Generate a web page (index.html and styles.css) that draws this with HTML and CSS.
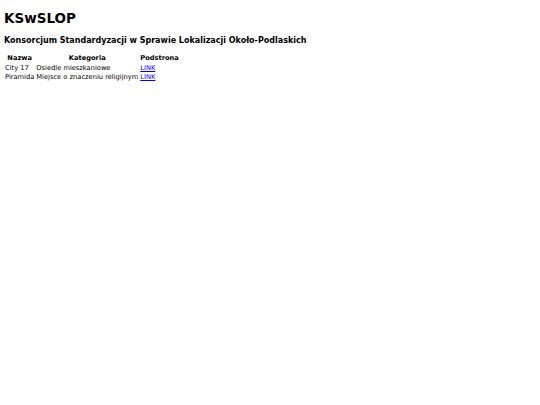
FILE: index.html
```html
<!DOCTYPE html>
<html lang="pl">
<head>
    <meta charset="UTF-8">
    <title>KSwSLOP</title>
    <link rel="stylesheet" href="styles.css">
</head>
<body>
    <h1>KSwSLOP</h1>
    <h2>Konsorcjum Standardyzacji w Sprawie Lokalizacji Około-Podlaskich</h2>
    <table>
        <tr>
            <th>Nazwa</th>
            <th>Kategoria</th>
            <th>Podstrona</th>
        </tr>
        <tr>
            <td>City 17</td>
            <td>Osiedle mieszkaniowe</td>
            <td><a href="#">LINK</a></td>
        </tr>
        <tr>
            <td>Piramida</td>
            <td>Miejsce o znaczeniu religijnym</td>
            <td><a href="#">LINK</a></td>
        </tr>
    </table>
</body>
</html>
```

FILE: styles.css
```css
body {
    font-family: "DejaVu Sans", Verdana, sans-serif;
    margin: 4px;
}
h1 {
    font-size: 13.5px;
    margin: 5.5px 0 10.7px;
}
h2 {
    font-size: 8px;
    margin: 0 0 9px;
}
table {
    font-size: 6.7px;
    border-spacing: 0;
}
th, td {
    padding: 0 1px;
    line-height: 9.4px;
}
a {
    color: #0000ee;
}
```
